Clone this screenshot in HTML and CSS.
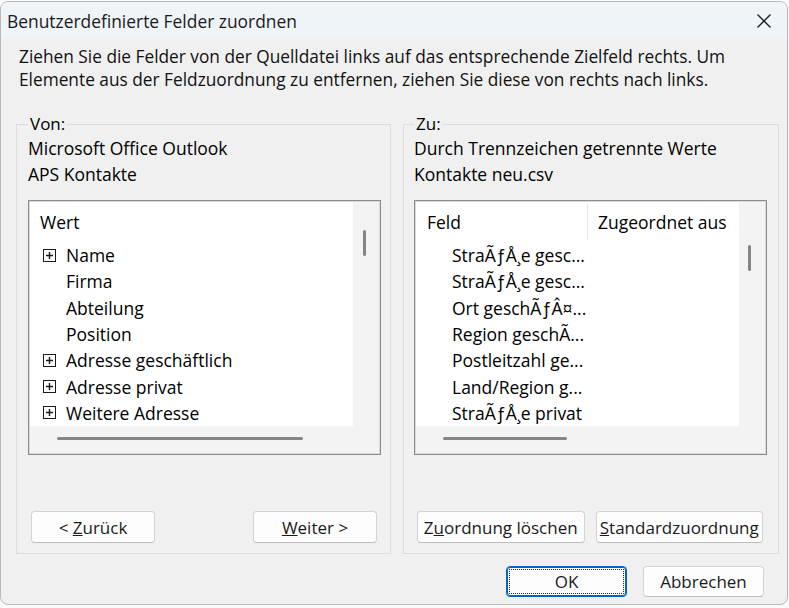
FILE: index.html
```html
<!DOCTYPE html>
<html lang="de">
<head>
    <meta charset="UTF-8">
    <title>Benutzerdefinierte Felder zuordnen</title>
    <link rel="stylesheet" href="styles.css">
</head>
<body>
    <div class="dialog">
        <div class="titlebar">
            <span class="title">Benutzerdefinierte Felder zuordnen</span>
            <span class="close">
                <svg width="16" height="16" viewBox="0 0 16 16"><path d="M1.5 1.5 L14.5 14.5 M14.5 1.5 L1.5 14.5" stroke="#1a1a1a" stroke-width="1.3" fill="none"/></svg>
            </span>
        </div>

        <div class="content">
            <p class="intro">Ziehen Sie die Felder von der Quelldatei links auf das entsprechende Zielfeld rechts. Um<br>Elemente aus der Feldzuordnung zu entfernen, ziehen Sie diese von rechts nach links.</p>

            <div class="groups">
                <!-- Quelle -->
                <fieldset class="group from">
                    <legend>Von:</legend>
                    <div class="source">Microsoft Office Outlook</div>
                    <div class="source">APS Kontakte</div>
                    <div class="listbox">
                        <div class="list-area">
                            <div class="list-head"><span class="col">Wert</span></div>
                            <div class="row"><svg class="plus" width="13" height="13" viewBox="0 0 13 13"><rect x="0.5" y="0.5" width="12" height="12" fill="#fff" stroke="#1a1a1a"/><path d="M3 6.5 H10 M6.5 3 V10" stroke="#1a1a1a" stroke-width="1.4"/></svg><span>Name</span></div>
                            <div class="row leaf">Firma</div>
                            <div class="row leaf">Abteilung</div>
                            <div class="row leaf">Position</div>
                            <div class="row"><svg class="plus" width="13" height="13" viewBox="0 0 13 13"><rect x="0.5" y="0.5" width="12" height="12" fill="#fff" stroke="#1a1a1a"/><path d="M3 6.5 H10 M6.5 3 V10" stroke="#1a1a1a" stroke-width="1.4"/></svg><span>Adresse geschäftlich</span></div>
                            <div class="row"><svg class="plus" width="13" height="13" viewBox="0 0 13 13"><rect x="0.5" y="0.5" width="12" height="12" fill="#fff" stroke="#1a1a1a"/><path d="M3 6.5 H10 M6.5 3 V10" stroke="#1a1a1a" stroke-width="1.4"/></svg><span>Adresse privat</span></div>
                            <div class="row"><svg class="plus" width="13" height="13" viewBox="0 0 13 13"><rect x="0.5" y="0.5" width="12" height="12" fill="#fff" stroke="#1a1a1a"/><path d="M3 6.5 H10 M6.5 3 V10" stroke="#1a1a1a" stroke-width="1.4"/></svg><span>Weitere Adresse</span></div>
                        </div>
                        <div class="vscroll"><span class="vthumb from-thumb"></span></div>
                        <div class="hscroll"><span class="hthumb from-hthumb"></span></div>
                    </div>
                    <div class="group-buttons">
                        <button class="btn">&lt; <u>Z</u>urück</button>
                        <button class="btn"><u>W</u>eiter &gt;</button>
                    </div>
                </fieldset>

                <!-- Ziel -->
                <fieldset class="group to">
                    <legend>Zu:</legend>
                    <div class="source">Durch Trennzeichen getrennte Werte</div>
                    <div class="source">Kontakte neu.csv</div>
                    <div class="listbox">
                        <div class="list-area">
                            <div class="list-head">
                                <span class="col col-field">Feld</span>
                                <span class="col">Zugeordnet aus</span>
                            </div>
                            <div class="row leaf">StraÃƒÅ¸e gesc...</div>
                            <div class="row leaf">StraÃƒÅ¸e gesc...</div>
                            <div class="row leaf">Ort geschÃƒÂ¤...</div>
                            <div class="row leaf">Region geschÃ...</div>
                            <div class="row leaf">Postleitzahl ge...</div>
                            <div class="row leaf">Land/Region g...</div>
                            <div class="row leaf">StraÃƒÅ¸e privat</div>
                        </div>
                        <div class="vscroll"><span class="vthumb to-thumb"></span></div>
                        <div class="hscroll"><span class="hthumb to-hthumb"></span></div>
                    </div>
                    <div class="group-buttons">
                        <button class="btn wide">Z<u>u</u>ordnung löschen</button>
                        <button class="btn wide"><u>S</u>tandardzuordnung</button>
                    </div>
                </fieldset>
            </div>

            <div class="footer">
                <button class="btn ok">OK</button>
                <button class="btn">Abbrechen</button>
            </div>
        </div>
    </div>
</body>
</html>
```

FILE: styles.css
```css
html {
    background: #fafafa;
}
body {
    margin: 0;
    font-family: "Open Sans", "Noto Sans", sans-serif;
    color: #000;
}

.dialog {
    width: 786px;
    height: 602px;
    margin-top: 1px;
    border: 1px solid #b9b9b9;
    border-radius: 8px;
    background: #f0f0f0;
    overflow: hidden;
}

.titlebar {
    height: 37px;
    display: flex;
    align-items: center;
    justify-content: space-between;
    background: #eff4f9;
    padding-left: 6px;
}
.title {
    font-size: 17.4px;
    color: #1b1b1b;
}
.close {
    width: 46px;
    height: 37px;
    display: flex;
    align-items: center;
    justify-content: center;
}

.content {
    padding: 0 8px 0 15px;
}
.intro {
    margin: 6px 0 0 0;
    padding-left: 3px;
    font-size: 17.3px;
    line-height: 23px;
    color: #111;
}

.groups {
    display: grid;
    grid-template-columns: 375px 1fr;
    gap: 12px;
    margin-top: 23px;
}
.group {
    margin: 0;
    min-width: 0;
    border: 1px solid #dcdcdc;
    padding: 1px 9px 10px 11px;
}
.group.to {
    padding-left: 10px;
    padding-right: 11px;
}
legend {
    padding: 0 2px;
    font-size: 17px;
    line-height: 20px;
}
.source {
    font-size: 17.5px;
    line-height: 26px;
}

.listbox {
    margin-top: 13px;
    height: 251px;
    border: 1px solid #8c8c8c;
    padding: 1px;
    background: #f3f3f3;
    box-shadow: inset 0 0 0 1px #d9d9d9;
    display: grid;
    grid-template-columns: 1fr 26px;
    grid-template-rows: 1fr 27px;
}
.list-area {
    background: #fff;
    font-size: 17.5px;
}
.list-head {
    height: 40px;
    display: flex;
    align-items: center;
}
.col {
    padding-left: 10px;
}
.col-field {
    width: 172px;
    box-sizing: border-box;
    padding-left: 11px;
    height: 36px;
    display: flex;
    align-items: center;
    border-right: 1px solid #e5e5e5;
}
.row {
    height: 26.3px;
    display: flex;
    align-items: center;
    padding-left: 13px;
    white-space: nowrap;
}
.row .plus {
    margin-right: 10px;
}
.row.leaf {
    padding-left: 36px;
}

.vscroll {
    background: #f3f3f3;
}
.vthumb {
    display: block;
    width: 3px;
    height: 26px;
    margin-left: 10px;
    border-radius: 2px;
    background: #858585;
}
.from-thumb {
    margin-top: 28px;
}
.to-thumb {
    margin-top: 43px;
    margin-left: 9px;
}
.hscroll {
    grid-column: 1 / -1;
    background: #f3f3f3;
}
.hthumb {
    display: block;
    height: 3px;
    margin: 11px 0 0 27px;
    border-radius: 2px;
    background: #858585;
}
.from-hthumb {
    width: 246px;
}
.to-hthumb {
    width: 124px;
}

.group-buttons {
    display: flex;
    justify-content: space-between;
    margin-top: 56px;
    padding: 0 4px 0 3px;
}
.btn {
    width: 124px;
    height: 32px;
    padding: 0;
    font-family: inherit;
    font-size: 17px;
    color: #1a1a1a;
    background: #fdfdfd;
    border: 1px solid #d3d3d3;
    border-bottom-color: #bdbdbd;
    border-radius: 4px;
    white-space: nowrap;
}
.btn.wide {
    width: 168px;
}
.group.to .group-buttons {
    justify-content: flex-start;
    gap: 11px;
}

.footer {
    display: flex;
    justify-content: flex-end;
    gap: 16px;
    margin: 12px 15px 0 0;
}
.footer .btn {
    width: 121px;
    height: 31px;
}
.btn.ok {
    border: 1px solid #0067c0;
    box-shadow: inset 0 0 0 1px #0067c0;
    outline: 1px dotted #222;
    outline-offset: -4px;
}
```
